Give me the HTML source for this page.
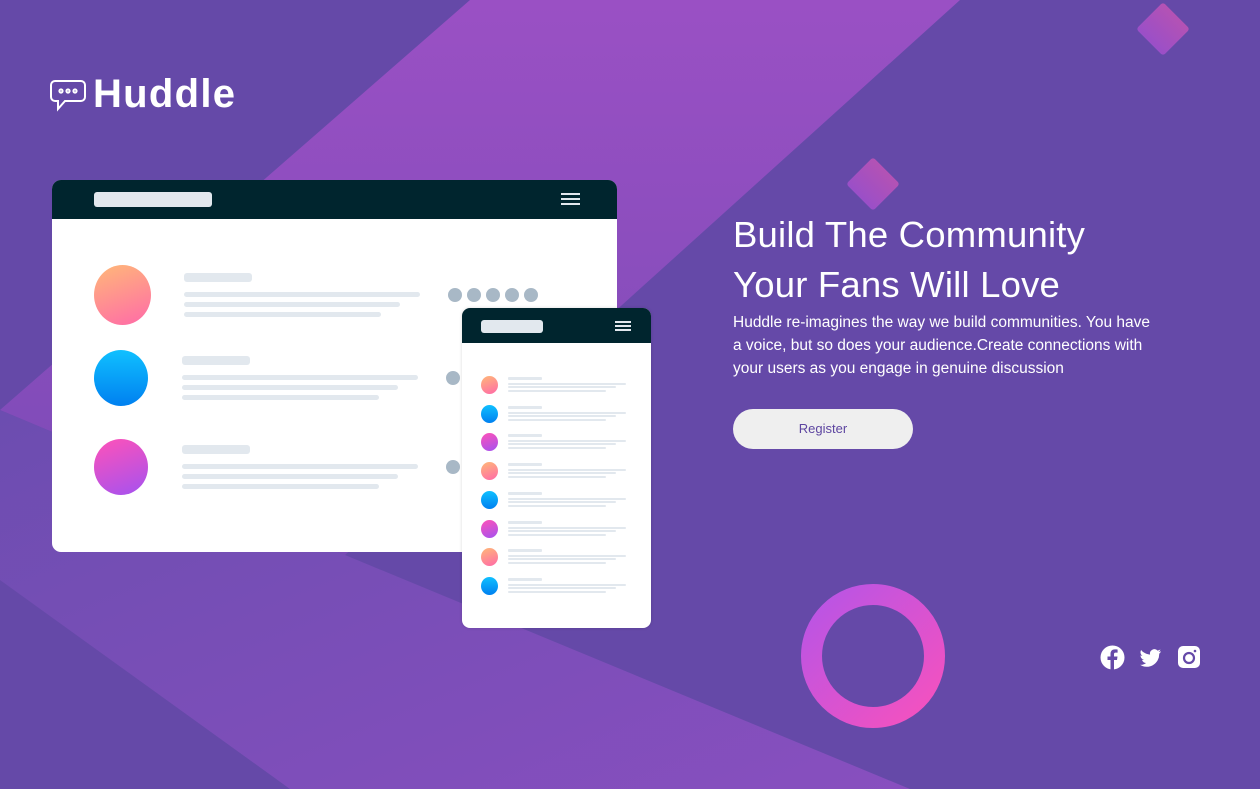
<!DOCTYPE html>
<html><head><meta charset="utf-8"><style>
*{margin:0;padding:0;box-sizing:border-box}
body{width:1260px;height:789px;overflow:hidden;background:#6549a8;font-family:"Liberation Sans",sans-serif;position:relative}
.abs{position:absolute}
.bar{position:absolute;background:#e2e8ee;border-radius:3px}
</style></head><body>
<svg class="abs" style="left:0;top:0" width="1260" height="789">
<defs>
<linearGradient id="b1" x1="0" y1="0" x2="0" y2="1"><stop offset="0" stop-color="#9a50c4"/><stop offset="1" stop-color="#7a4bb6"/></linearGradient>
<linearGradient id="b2" x1="0" y1="0" x2="1" y2="1"><stop offset="0" stop-color="#6c4db0"/><stop offset="1" stop-color="#884fbf"/></linearGradient>
<linearGradient id="ring" x1="0" y1="0" x2="1" y2="1"><stop offset="0" stop-color="#b755e6"/><stop offset="1" stop-color="#f651be"/></linearGradient>
<linearGradient id="dia" x1="0" y1="0" x2="0" y2="1"><stop offset="0" stop-color="#b452b4"/><stop offset="1" stop-color="#9a4fc8"/></linearGradient>
</defs>
<polygon points="470,0 960,0 345,555 0,410" fill="url(#b1)"/>
<polygon points="0,410 345,555 910,789 290,789 0,580" fill="url(#b2)"/>
<circle cx="873" cy="656" r="61.5" fill="none" stroke="url(#ring)" stroke-width="21"/>
<rect x="1144" y="10" width="38" height="38" rx="3" transform="rotate(45 1163 29)" fill="url(#dia)"/>
<rect x="854" y="165" width="38" height="38" rx="3" transform="rotate(45 873 184)" fill="url(#dia)"/>
</svg>

<svg class="abs" style="left:50px;top:80px" width="38" height="32" viewBox="0 0 38 32" fill="none" stroke="#fff" stroke-width="2">
<path d="M5 1h26a4 4 0 0 1 4 4v12a4 4 0 0 1-4 4H15l-7 8v-8H5a4 4 0 0 1-4-4V5a4 4 0 0 1 4-4z"/>
<circle cx="11" cy="11" r="1.6"/><circle cx="18" cy="11" r="1.6"/><circle cx="25" cy="11" r="1.6"/>
</svg>
<div class="abs" style="left:93px;top:72px;color:#fff;font-size:40px;font-weight:bold;letter-spacing:1.3px">Huddle</div>

<!-- desktop mockup -->
<div class="abs" style="left:52px;top:180px;width:565px;height:372px;background:#fff;border-radius:9px;overflow:hidden">
<div style="height:39px;background:#00252e;position:relative">
<div class="abs" style="left:42px;top:12px;width:118px;height:15px;background:#e2e8ee;border-radius:3px"></div>
<div class="abs" style="left:509px;top:13px;width:19px;height:2px;background:#e2e8ee;box-shadow:0 5px 0 #e2e8ee,0 10px 0 #e2e8ee"></div>
</div>
<div class="abs" style="left:42px;top:85px;width:57px;height:60px;border-radius:50%;background:linear-gradient(160deg,#ffb878,#ff6aa8)"></div>
<div class="abs" style="left:42px;top:170px;width:54px;height:56px;border-radius:50%;background:linear-gradient(180deg,#10c0ff,#0080f0)"></div>
<div class="abs" style="left:42px;top:259px;width:54px;height:56px;border-radius:50%;background:linear-gradient(160deg,#ff52b8,#a452f0)"></div>
<div class="bar" style="left:132px;top:93px;width:68px;height:9px"></div>
<div class="bar" style="left:132px;top:112px;width:236px;height:5px"></div>
<div class="bar" style="left:132px;top:122px;width:216px;height:5px"></div>
<div class="bar" style="left:132px;top:132px;width:197px;height:5px"></div>
<div class="bar" style="left:130px;top:176px;width:68px;height:9px"></div>
<div class="bar" style="left:130px;top:195px;width:236px;height:5px"></div>
<div class="bar" style="left:130px;top:205px;width:216px;height:5px"></div>
<div class="bar" style="left:130px;top:215px;width:197px;height:5px"></div>
<div class="bar" style="left:130px;top:265px;width:68px;height:9px"></div>
<div class="bar" style="left:130px;top:284px;width:236px;height:5px"></div>
<div class="bar" style="left:130px;top:294px;width:216px;height:5px"></div>
<div class="bar" style="left:130px;top:304px;width:197px;height:5px"></div>
<div class="abs" style="left:396px;top:108px;width:14px;height:14px;border-radius:50%;background:#a8b8c6;box-shadow:19px 0 0 #a8b8c6,38px 0 0 #a8b8c6,57px 0 0 #a8b8c6,76px 0 0 #a8b8c6"></div>
<div class="abs" style="left:394px;top:191px;width:14px;height:14px;border-radius:50%;background:#a8b8c6"></div>
<div class="abs" style="left:394px;top:280px;width:14px;height:14px;border-radius:50%;background:#a8b8c6"></div>
</div>

<!-- mobile mockup -->
<div class="abs" style="left:462px;top:308px;width:189px;height:320px;background:#fff;border-radius:8px;overflow:hidden;box-shadow:0 0 3px rgba(0,0,0,.15)">
<div style="height:35px;background:#00252e;position:relative">
<div class="abs" style="left:19px;top:12px;width:62px;height:13px;background:#e2e8ee;border-radius:3px"></div>
<div class="abs" style="left:153px;top:13px;width:16px;height:2px;background:#e2e8ee;box-shadow:0 4px 0 #e2e8ee,0 8px 0 #e2e8ee"></div>
</div>
</div>
<div id="rows"></div>
<script>
var g=['linear-gradient(160deg,#ffb878,#ff6aa8)','linear-gradient(180deg,#10c0ff,#0080f0)','linear-gradient(160deg,#ff52b8,#a452f0)'];
var h='';
for(var i=0;i<8;i++){var y=385+i*28.7;
h+='<div class="abs" style="left:481px;top:'+(y-9)+'px;width:17px;height:18px;border-radius:50%;background:'+g[i%3]+'"></div>';
h+='<div class="bar" style="left:508px;top:'+(y-8)+'px;width:34px;height:3px;border-radius:1px"></div>';
h+='<div class="bar" style="left:508px;top:'+(y-2)+'px;width:118px;height:2px;border-radius:1px"></div>';
h+='<div class="bar" style="left:508px;top:'+(y+1)+'px;width:108px;height:2px;border-radius:1px"></div>';
h+='<div class="bar" style="left:508px;top:'+(y+5)+'px;width:98px;height:2px;border-radius:1px"></div>';}
document.getElementById('rows').innerHTML=h;
</script>

<div class="abs" style="left:733px;top:210px;color:#fff;font-size:36.5px;line-height:50px;letter-spacing:0.2px">Build The Community<br>Your Fans Will Love</div>
<div class="abs" style="left:733px;top:311px;width:465px;color:#fff;font-size:15.5px;line-height:23px">Huddle re-imagines the way we build communities. You have<br>a voice, but so does your audience.Create connections with<br>your users as you engage in genuine discussion</div>
<div class="abs" style="left:733px;top:409px;width:180px;height:40px;border-radius:20px;background:#efefef;color:#5d45a0;font-size:13px;line-height:40px;text-align:center">Register</div>

<svg class="abs" style="left:1100px;top:645px" width="102" height="25" viewBox="0 0 102 25">
<circle cx="12.5" cy="12.5" r="12" fill="#fff"/>
<path d="M14 25V15h3l.5-3.5H14V9.3c0-1 .3-1.7 1.8-1.7h1.8V4.5c-.3 0-1.4-.1-2.7-.1-2.7 0-4.4 1.600-4.4 4.6v2.5H7.5V15h3v10z" fill="#6549a8"/>
<path d="M61 6.2c-.8.4-1.6.6-2.5.7.9-.5 1.6-1.4 1.9-2.4-.8.5-1.8.9-2.8 1.1a4.4 4.4 0 0 0-7.5 4c-3.6-.2-6.9-1.9-9-4.6-1.2 2-.6 4.6 1.4 5.9-.7 0-1.4-.2-2-.5 0 2.1 1.5 4 3.5 4.4-.6.2-1.3.2-2 .1.6 1.8 2.2 3 4.1 3.1A8.9 8.9 0 0 1 40 19.8a12.5 12.5 0 0 0 19.2-11.1c.7-.6 1.4-1.3 1.8-2.5z" fill="#fff"/>
<rect x="78" y="1" width="22" height="22" rx="5" fill="#fff"/>
<circle cx="89" cy="13" r="5" fill="none" stroke="#6549a8" stroke-width="2.2"/>
<circle cx="95" cy="6" r="1.3" fill="#6549a8"/>
</svg>
</body></html>
